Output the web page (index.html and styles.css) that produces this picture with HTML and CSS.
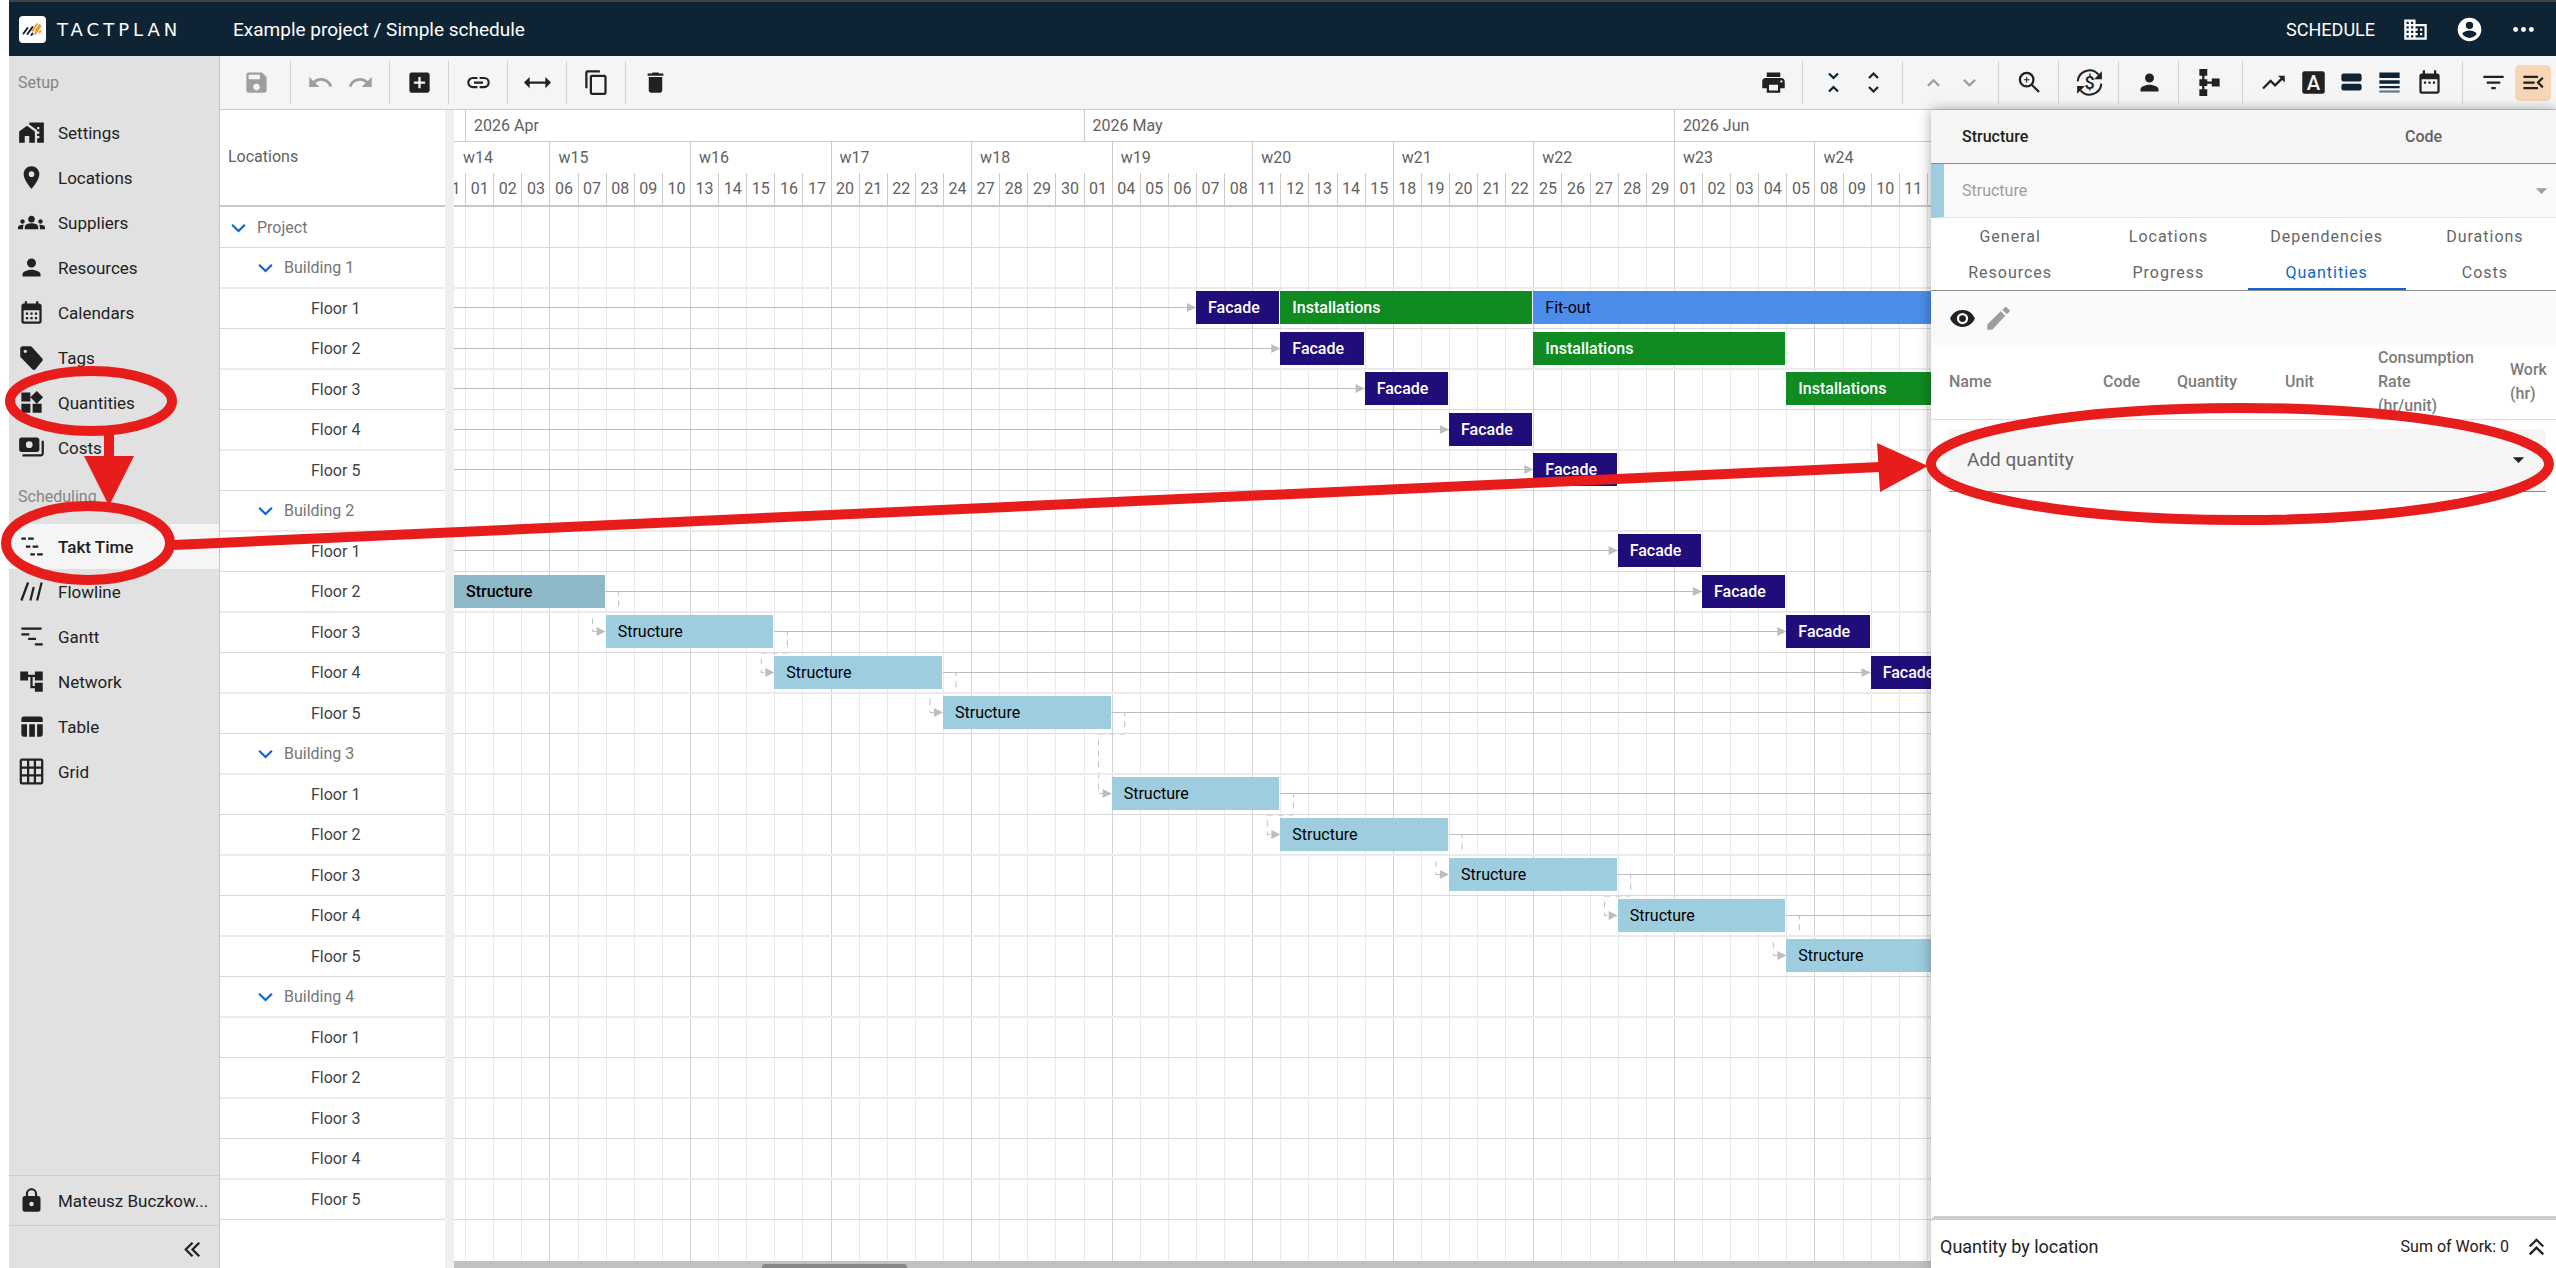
FILE: index.html
```html
<!DOCTYPE html>
<html lang="en">
<head>
  <meta charset="UTF-8">
  <title>Tactplan - Simple schedule</title>
  <meta name="viewport" content="width=device-width, initial-scale=1.0">
  <link rel="stylesheet" href="styles.css">
</head>
<body>

  <!-- icon set -->
  <svg class="defs" width="0" height="0" aria-hidden="true">
    <symbol id="i-home" viewBox="0 0 24 24"><path d="M1 11v10h5v-6h4v6h5V11L8 6zM10 3v1.97l7 5V11h2v2h-2v2h2v2h-2v4h6V3H10zm9 6h-2V7h2v2z"/></symbol>
    <symbol id="i-pin" viewBox="0 0 24 24"><path d="M12 2C8.13 2 5 5.13 5 9c0 5.25 7 13 7 13s7-7.75 7-13c0-3.87-3.13-7-7-7zm0 9.5a2.5 2.5 0 0 1 0-5 2.5 2.5 0 0 1 0 5z"/></symbol>
    <symbol id="i-groups" viewBox="0 0 24 24"><path d="M12 12.75c1.63 0 3.07.39 4.24.9 1.08.48 1.76 1.56 1.76 2.73V18H6v-1.61c0-1.18.68-2.26 1.76-2.73 1.17-.52 2.61-.91 4.24-.91zM4 13c1.1 0 2-.9 2-2s-.9-2-2-2-2 .9-2 2 .9 2 2 2zm1.13 1.1C4.76 14.04 4.39 14 4 14c-.99 0-1.93.21-2.78.58C.48 14.9 0 15.62 0 16.43V18h4.5v-1.61c0-.83.23-1.61.63-2.29zM20 13c1.1 0 2-.9 2-2s-.9-2-2-2-2 .9-2 2 .9 2 2 2zm4 3.43c0-.81-.48-1.53-1.22-1.85A6.95 6.95 0 0 0 20 14c-.39 0-.76.04-1.13.1.4.68.63 1.46.63 2.29V18H24v-1.57zM12 6c1.66 0 3 1.34 3 3s-1.34 3-3 3-3-1.34-3-3 1.34-3 3-3z"/></symbol>
    <symbol id="i-person" viewBox="0 0 24 24"><path d="M12 12c2.21 0 4-1.79 4-4s-1.79-4-4-4-4 1.79-4 4 1.79 4 4 4zm0 2c-2.67 0-8 1.34-8 4v2h16v-2c0-2.66-5.33-4-8-4z"/></symbol>
    <symbol id="i-calendar" viewBox="0 0 24 24"><path d="M19 4h-1V2h-2v2H8V2H6v2H5c-1.11 0-2 .9-2 2v14a2 2 0 0 0 2 2h14c1.1 0 2-.9 2-2V6c0-1.1-.9-2-2-2zm0 16H5V10h14v10zM9 14H7v-2h2v2zm4 0h-2v-2h2v2zm4 0h-2v-2h2v2zm-8 4H7v-2h2v2zm4 0h-2v-2h2v2zm4 0h-2v-2h2v2z"/></symbol>
    <symbol id="i-range" viewBox="0 0 24 24"><path d="M9 11H7v2h2v-2zm4 0h-2v2h2v-2zm4 0h-2v2h2v-2zm2-7h-1V1h-2v3H8V1H6v3H5c-1.11 0-2 .9-2 2v14a2 2 0 0 0 2 2h14c1.1 0 2-.9 2-2V6c0-1.1-.9-2-2-2zm0 16H5V9h14v11z"/></symbol>
    <symbol id="i-tag" viewBox="0 0 24 24"><path d="M4 2h7c.6 0 1.1.2 1.4.6l9 10c.8.8.8 2 0 2.8L15.5 22.400c-.8.8-2 .8-2.800 0L3 12.500C2.400 12 2 11.500 2 11V4c0-1.100.9-2 2-2zm2.500 3A1.500 1.500 0 1 0 6.500 8 1.500 1.500 0 0 0 6.500 5z"/></symbol>
    <symbol id="i-widgets" viewBox="0 0 24 24"><path d="M13 13v8h8v-8h-8zM3 21h8v-8H3v8zM3 3v8h8V3H3zm13.660-1.310L11 7.340 16.660 13l5.660-5.660-5.660-5.650z"/></symbol>
    <symbol id="i-costs" viewBox="0 0 24 24"><path d="M23 6v11c0 1.660-1.340 3-3 3H4v-2h16c.55 0 1-.45 1-1V6h2zM3 3h14c1.100 0 2 .9 2 2v9c0 1.100-.9 2-2 2H3c-1.100 0-2-.9-2-2V5c0-1.100.9-2 2-2zm7 3.500a3 3 0 1 0 0 6 3 3 0 0 0 0-6z"/></symbol>
    <symbol id="i-takt" viewBox="0 0 24 24"><path d="M3 4h4v2H3zM9 4h5v2H9zM7 11h4v2H7zM13 11h5v2h-5zM11 18h4v2h-4zM17 18h5v2h-5z"/></symbol>
    <symbol id="i-flow" viewBox="0 0 24 24"><path d="M3 20L9 4M11 20L14 8M17 20L21 4" fill="none" stroke="currentColor" stroke-width="2"/></symbol>
    <symbol id="i-gantt" viewBox="0 0 24 24"><path d="M3 4h18v2H3zM3 9h7v2H3zM9 13h7v2H9zM15 18h7v2h-7z"/></symbol>
    <symbol id="i-network" viewBox="0 0 24 24"><path d="M22 11V3h-7v3H9V3H2v8h7V8h2v10h4v3h7v-8h-7v3h-2V8h2v3z"/></symbol>
    <symbol id="i-table" viewBox="0 0 24 24"><path d="M10 10.020h5V21h-5V10.020zM17 21h3c1.100 0 2-.9 2-2v-9h-5v11zm3-18H5c-1.100 0-2 .9-2 2v3h19V5c0-1.100-.9-2-2-2zM3 19c0 1.100.9 2 2 2h3V10H3v9z"/></symbol>
    <symbol id="i-grid" viewBox="0 0 24 24"><path d="M3.500 1.500h17c.6 0 1 .4 1 1v19c0 .6-.4 1-1 1h-17c-.6 0-1-.4-1-1v-19c0-.6.4-1 1-1zM9 2v20M15 2v20M3 8.500h18M3 15.500h18" fill="none" stroke="currentColor" stroke-width="2"/></symbol>
    <symbol id="i-lock" viewBox="0 0 24 24"><path d="M18 8h-1V6c0-2.760-2.240-5-5-5S7 3.240 7 6v2H6c-1.100 0-2 .9-2 2v10c0 1.100.9 2 2 2h12c1.100 0 2-.9 2-2V10c0-1.100-.9-2-2-2zm-6 9a2 2 0 1 1 0-4 2 2 0 0 1 0 4zm3.100-9H8.900V6a3.100 3.100 0 0 1 6.200 0v2z"/></symbol>
    <symbol id="i-dleft" viewBox="0 0 24 24"><path d="M12 6l-6 6 6 6M18 6l-6 6 6 6" fill="none" stroke="currentColor" stroke-width="2"/></symbol>
    <symbol id="i-dup" viewBox="0 0 24 24"><path d="M6 12l6-6 6 6M6 19l6-6 6 6" fill="none" stroke="currentColor" stroke-width="2"/></symbol>
    <symbol id="i-save" viewBox="0 0 24 24"><path d="M17 3H5a2 2 0 0 0-2 2v14a2 2 0 0 0 2 2h14c1.100 0 2-.9 2-2V7l-4-4zm-5 16c-1.660 0-3-1.340-3-3s1.340-3 3-3 3 1.340 3 3-1.340 3-3 3zm3-10H5V5h10v4z"/></symbol>
    <symbol id="i-undo" viewBox="0 0 24 24"><path d="M12.500 8c-2.650 0-5.050.99-6.900 2.600L2 7v9h9l-3.620-3.620A8 8 0 0 1 20.100 16l2.370-.78A10.500 10.500 0 0 0 12.500 8z"/></symbol>
    <symbol id="i-redo" viewBox="0 0 24 24"><path d="M18.400 10.600A10.500 10.500 0 0 0 1.540 15.220L3.900 16a8 8 0 0 1 12.720-3.620L13 16h9V7l-3.600 3.600z"/></symbol>
    <symbol id="i-add" viewBox="0 0 24 24"><path d="M19 3H5a2 2 0 0 0-2 2v14a2 2 0 0 0 2 2h14c1.100 0 2-.9 2-2V5c0-1.100-.9-2-2-2zm-2 10h-4v4h-2v-4H7v-2h4V7h2v4h4v2z"/></symbol>
    <symbol id="i-link" viewBox="0 0 24 24"><path d="M3.900 12c0-1.710 1.390-3.100 3.100-3.100h4V7H7a5 5 0 0 0 0 10h4v-1.900H7A3.100 3.100 0 0 1 3.900 12zM8 13h8v-2H8v2zm9-6h-4v1.900h4a3.100 3.100 0 0 1 0 6.200h-4V17h4a5 5 0 0 0 0-10z"/></symbol>
    <symbol id="i-width" viewBox="0 0 24 24"><path d="M0 12l5-5v4h14V7l5 5-5 5v-4H5v4z"/></symbol>
    <symbol id="i-copy" viewBox="0 0 24 24"><path d="M15 1H4a2 2 0 0 0-2 2v14h2V3h11V1zm4 4H8a2 2 0 0 0-2 2v14c0 1.100.9 2 2 2h11c1.100 0 2-.9 2-2V7c0-1.100-.9-2-2-2zm0 16H8V7h11v14z"/></symbol>
    <symbol id="i-trash" viewBox="0 0 24 24"><path d="M6 19c0 1.100.9 2 2 2h8c1.100 0 2-.9 2-2V7H6v12zM19 4h-3.500l-1-1h-5l-1 1H5v2h14V4z"/></symbol>
    <symbol id="i-print" viewBox="0 0 24 24"><path d="M19 8H5c-1.660 0-3 1.340-3 3v6h4v4h12v-4h4v-6c0-1.660-1.340-3-3-3zm-3 11H8v-5h8v5zm3-7a1 1 0 1 1 0-2 1 1 0 0 1 0 2zm-1-9H6v4h12V3z"/></symbol>
    <symbol id="i-fold" viewBox="0 0 24 24"><path d="M8 4l4 4 4-4M8 20l4-4 4 4" fill="none" stroke="currentColor" stroke-width="2"/></symbol>
    <symbol id="i-unfold" viewBox="0 0 24 24"><path d="M8 8l4-4 4 4M8 16l4 4 4-4" fill="none" stroke="currentColor" stroke-width="2"/></symbol>
    <symbol id="i-up" viewBox="0 0 24 24"><path d="M7 15l5-5 5 5" fill="none" stroke="currentColor" stroke-width="2"/></symbol>
    <symbol id="i-down" viewBox="0 0 24 24"><path d="M7 9.500l5 5 5-5" fill="none" stroke="currentColor" stroke-width="2"/></symbol>
    <symbol id="i-zoom" viewBox="0 0 24 24"><path d="M14 14l6.500 6.500M9.500 3.500a6 6 0 1 0 0 12 6 6 0 0 0 0-12z" fill="none" stroke="currentColor" stroke-width="2"/><path d="M9.500 7v5M7 9.500h5" fill="none" stroke="currentColor"/></symbol>
    <symbol id="i-dollar" viewBox="0 0 24 24"><path d="M1.500 11A10.500 10.500 0 0 1 20 5M22.500 13A10.500 10.500 0 0 1 4 19" fill="none" stroke="currentColor" stroke-width="1.800"/><path d="M23 2v7h-7zM1 22v-7h7z"/><text x="12" y="17.500" text-anchor="middle" font-size="16" font-weight="500">$</text></symbol>
    <symbol id="i-tree" viewBox="0 0 24 24"><path d="M3 0h7v6H7.500v3H10v2h4V8.500h7v7h-7V13h-4v2H7.500v3H10v6H3v-6h2.500v-3H3V9h2.500V6H3z"/></symbol>
    <symbol id="i-trend" viewBox="0 0 24 24"><path d="M16 6l2.290 2.290-4.880 4.880-4-4L2 16.590 3.410 18l6-6 4 4 6.300-6.290L22 12V6z"/></symbol>
    <symbol id="i-letter" viewBox="0 0 24 24"><rect x="2" y="2" width="20" height="20" rx="2"/><text x="12" y="18.500" text-anchor="middle" font-size="18" font-weight="500" fill="#f5f5f5">A</text></symbol>
    <symbol id="i-bars" viewBox="0 0 24 24"><rect x="3" y="4" width="18" height="7" rx="2"/><rect x="3" y="13" width="18" height="6" rx="2"/></symbol>
    <symbol id="i-lines" viewBox="0 0 24 24"><path d="M3 3h18v5H3zM3 10h18v3H3zM3 15h18v2H3z"/><path d="M3 19h18v2H3z" opacity=".6"/></symbol>
    <symbol id="i-filter" viewBox="0 0 24 24"><path d="M10 18h4v-2h-4v2zM3 6v2h18V6H3zm3 7h12v-2H6v2z"/></symbol>
    <symbol id="i-menu" viewBox="0 0 24 24"><path d="M3 18h13v-2H3v2zm0-5h10v-2H3v2zm0-7v2h13V6H3zm18 9.590L17.420 12 21 8.410 19.590 7l-5 5 5 5L21 15.590z"/></symbol>
    <symbol id="i-building" viewBox="0 0 24 24"><path d="M12 7V3H2v18h20V7H12zM6 19H4v-2h2v2zm0-4H4v-2h2v2zm0-4H4V9h2v2zm0-4H4V5h2v2zm4 12H8v-2h2v2zm0-4H8v-2h2v2zm0-4H8V9h2v2zm0-4H8V5h2v2zm10 12h-8v-2h2v-2h-2v-2h2v-2h-2V9h8v10zm-2-8h-2v2h2v-2zm0 4h-2v2h2v-2z"/></symbol>
    <symbol id="i-account" viewBox="0 0 24 24"><path d="M12 1.500a10.500 10.500 0 1 0 0 21 10.500 10.500 0 0 0 0-21zM12 5a3.300 3.300 0 1 1 0 6.600A3.300 3.300 0 0 1 12 5zm0 14.500a7.600 7.600 0 0 1-6.300-3.400c0-2 4.200-3.200 6.300-3.200s6.300 1.200 6.300 3.200a7.600 7.600 0 0 1-6.300 3.400z"/></symbol>
    <symbol id="i-dots" viewBox="0 0 24 24"><circle cx="5" cy="12" r="2.200"/><circle cx="12" cy="12" r="2.200"/><circle cx="19" cy="12" r="2.200"/></symbol>
    <symbol id="i-eye" viewBox="0 0 24 24"><path d="M12 4.500C7 4.500 2.730 7.610 1 12c1.730 4.390 6 7.500 11 7.500s9.270-3.110 11-7.500c-1.730-4.390-6-7.500-11-7.500zM12 17a5 5 0 1 1 0-10 5 5 0 0 1 0 10zm0-8a3 3 0 1 0 0 6 3 3 0 0 0 0-6z"/></symbol>
    <symbol id="i-pencil" viewBox="0 0 24 24"><path d="M2 17.250V22h4.500L18 9.500 14 5.500zM21.700 5.900a1 1 0 0 0 0-1.400l-2.500-2.500a1 1 0 0 0-1.400 0L15.400 4.300l4 4z"/></symbol>
    <symbol id="i-arrow" viewBox="0 0 24 24"><path d="M7 10h10l-5 5z"/></symbol>
    <symbol id="i-logo" viewBox="0 0 27 27">
      <g fill="none" stroke-width="2" stroke-linecap="round">
        <path d="M4.500 17.500L8.500 12M8.500 18L13.500 11M12.500 19L13.500 17.500" stroke="#0e2435"/>
        <path d="M13.500 14.500L18 8M16 18L21.500 10M16.800 14.500L20.500 9M20.500 16.500L21.500 15" stroke="#f29a2e"/>
      </g>
    </symbol>
  </svg>

  <div class="app">
    <header class="topbar">
      <svg class="logo"><use href="#i-logo"/></svg>
      <span class="brand">TACTPLAN</span>
      <span class="crumb">Example project / Simple schedule</span>
      <span class="mode">SCHEDULE</span>
      <button class="top-btn" aria-label="Company"><svg class="icon"><use href="#i-building"/></svg></button>
      <button class="top-btn" aria-label="Account"><svg class="icon"><use href="#i-account"/></svg></button>
      <button class="top-btn" aria-label="More"><svg class="icon"><use href="#i-dots"/></svg></button>
    </header>

    <div class="main">
      <nav class="sidebar">
        <div class="nav-title">Setup</div>
        <a href="#" class="nav-item"><svg class="icon"><use href="#i-home"/></svg>Settings</a>
        <a href="#" class="nav-item"><svg class="icon"><use href="#i-pin"/></svg>Locations</a>
        <a href="#" class="nav-item"><svg class="icon"><use href="#i-groups"/></svg>Suppliers</a>
        <a href="#" class="nav-item"><svg class="icon"><use href="#i-person"/></svg>Resources</a>
        <a href="#" class="nav-item"><svg class="icon"><use href="#i-calendar"/></svg>Calendars</a>
        <a href="#" class="nav-item"><svg class="icon"><use href="#i-tag"/></svg>Tags</a>
        <a href="#" class="nav-item"><svg class="icon"><use href="#i-widgets"/></svg>Quantities</a>
        <a href="#" class="nav-item"><svg class="icon"><use href="#i-costs"/></svg>Costs</a>
        <div class="nav-title">Scheduling</div>
        <a href="#" class="nav-item active"><svg class="icon"><use href="#i-takt"/></svg>Takt Time</a>
        <a href="#" class="nav-item"><svg class="icon"><use href="#i-flow"/></svg>Flowline</a>
        <a href="#" class="nav-item"><svg class="icon"><use href="#i-gantt"/></svg>Gantt</a>
        <a href="#" class="nav-item"><svg class="icon"><use href="#i-network"/></svg>Network</a>
        <a href="#" class="nav-item"><svg class="icon"><use href="#i-table"/></svg>Table</a>
        <a href="#" class="nav-item"><svg class="icon"><use href="#i-grid"/></svg>Grid</a>
        <div class="nav-user"><svg class="icon"><use href="#i-lock"/></svg><span>Mateusz Buczkow...</span></div>
        <button class="nav-fold" aria-label="Collapse menu"><svg class="icon"><use href="#i-dleft"/></svg></button>
      </nav>

      <div class="content">
        <div class="toolbar">
          <div class="group first"><button disabled aria-label="Save"><svg class="icon"><use href="#i-save"/></svg></button></div>
          <div class="group">
            <button disabled aria-label="Undo"><svg class="icon"><use href="#i-undo"/></svg></button>
            <button disabled aria-label="Redo"><svg class="icon"><use href="#i-redo"/></svg></button>
          </div>
          <div class="group"><button aria-label="Add"><svg class="icon"><use href="#i-add"/></svg></button></div>
          <div class="group"><button aria-label="Link"><svg class="icon"><use href="#i-link"/></svg></button></div>
          <div class="group"><button aria-label="Stretch"><svg class="icon"><use href="#i-width"/></svg></button></div>
          <div class="group"><button aria-label="Copy"><svg class="icon"><use href="#i-copy"/></svg></button></div>
          <div class="group last"><button aria-label="Delete"><svg class="icon"><use href="#i-trash"/></svg></button></div>
          <div class="spacer"></div>
          <div class="group"><button aria-label="Print"><svg class="icon"><use href="#i-print"/></svg></button></div>
          <div class="group navy">
            <button aria-label="Collapse rows"><svg class="icon"><use href="#i-fold"/></svg></button>
            <button aria-label="Expand rows"><svg class="icon"><use href="#i-unfold"/></svg></button>
          </div>
          <div class="group tight">
            <button disabled aria-label="Move up"><svg class="icon"><use href="#i-up"/></svg></button>
            <button disabled aria-label="Move down"><svg class="icon"><use href="#i-down"/></svg></button>
          </div>
          <div class="group"><button aria-label="Zoom"><svg class="icon"><use href="#i-zoom"/></svg></button></div>
          <div class="group"><button aria-label="Cost flow"><svg class="icon"><use href="#i-dollar"/></svg></button></div>
          <div class="group"><button aria-label="Resources"><svg class="icon"><use href="#i-person"/></svg></button></div>
          <div class="group wide"><button aria-label="Structure"><svg class="icon"><use href="#i-tree"/></svg></button></div>
          <div class="group wide">
            <button aria-label="Trend"><svg class="icon"><use href="#i-trend"/></svg></button>
            <button aria-label="Labels"><svg class="icon"><use href="#i-letter"/></svg></button>
            <button class="slim" aria-label="Bar style"><svg class="icon navy"><use href="#i-bars"/></svg></button>
            <button aria-label="Row height"><svg class="icon navy"><use href="#i-lines"/></svg></button>
            <button aria-label="Calendar"><svg class="icon"><use href="#i-range"/></svg></button>
          </div>
          <div class="group last">
            <button aria-label="Filter"><svg class="icon"><use href="#i-filter"/></svg></button>
            <button class="on" aria-label="Details panel"><svg class="icon"><use href="#i-menu"/></svg></button>
          </div>
        </div>

        <div class="workspace">
          <div class="tree">
            <div class="tree-head">Locations</div>
            <div id="tree"></div>
          </div>
          <div class="splitter"></div>

          <div class="timeline">
            <div class="track head">
              <div class="months" id="months"></div>
              <div class="weeks" id="weeks"></div>
              <div class="days" id="days"></div>
            </div>
            <div class="track chart">
              <div class="lines" id="lines"></div>
              <svg class="deps" id="deps" preserveAspectRatio="none"></svg>
              <div class="rows" id="rows"></div>
            </div>
            <div class="scrollbar"><div class="thumb"></div></div>
          </div>

          <aside class="panel">
            <div class="panel-head"><strong>Structure</strong><span>Code</span></div>
            <div class="type-row">
              <select disabled aria-label="Type"><option>Structure</option></select>
              <svg class="icon"><use href="#i-arrow"/></svg>
            </div>
            <div class="tabs">
              <button>General</button><button>Locations</button><button>Dependencies</button><button>Durations</button>
              <button>Resources</button><button>Progress</button><button class="active">Quantities</button><button>Costs</button>
            </div>
            <div class="tools">
              <button aria-label="View"><svg class="icon"><use href="#i-eye"/></svg></button>
              <button disabled aria-label="Edit"><svg class="icon"><use href="#i-pencil"/></svg></button>
            </div>
            <table class="quantities">
              <thead>
                <tr><th class="c-name">Name</th><th class="c-code">Code</th><th class="c-qty">Quantity</th><th class="c-unit">Unit</th><th class="c-rate">Consumption<br>Rate<br>(hr/unit)</th><th>Work (hr)</th></tr>
              </thead>
            </table>
            <div class="add">
              <select aria-label="Add quantity"><option>Add quantity</option></select>
              <svg class="icon"><use href="#i-arrow"/></svg>
            </div>
            <div class="panel-foot">
              <span class="foot-title">Quantity by location</span>
              <span>Sum of Work: 0</span>
              <button aria-label="Expand"><svg class="icon"><use href="#i-dup"/></svg></button>
            </div>
          </aside>
        </div>
      </div>
    </div>
  </div>

  <!-- guide marks over the page -->
  <svg class="marks" aria-hidden="true">
    <g fill="none" stroke="#e71d1b" stroke-width="10">
      <ellipse cx="91" cy="401" rx="81" ry="30"/>
      <path d="M109 434V460"/>
      <ellipse cx="88" cy="543" rx="82" ry="37"/>
      <path d="M174 545L1880 467"/>
      <ellipse cx="2240" cy="464" rx="309" ry="56"/>
    </g>
    <path d="M84 456H134L109 506zM1877 443L1928 466 1880 492z" fill="#e71d1b"/>
  </svg>

  <script>
    // the track starts on Tue 31 March and shows 54 working days
    const DAYS = 54;
    const DAY_W = 28;

    // label, level
    const rows = [["Project", 0]];
    for (let b = 1; b <= 4; b++) {
      rows.push(["Building " + b, 1]);
      for (let f = 1; f <= 5; f++) rows.push(["Floor " + f, 2]);
    }

    // row, first day, length, type
    const tasks = [
      [2, 27, 3, "facade"], [2, 30, 9, "installations"], [2, 39, 15, "fit-out"],
      [3, 30, 3, "facade"], [3, 39, 9, "installations"],
      [4, 33, 3, "facade"], [4, 48, 6, "installations"],
      [5, 36, 3, "facade"],
      [6, 39, 3, "facade"],
      [8, 42, 3, "facade"],
      [9, 0, 6, "structure", true], [9, 45, 3, "facade"],
      [10, 6, 6, "structure"], [10, 48, 3, "facade"],
      [11, 12, 6, "structure"], [11, 51, 3, "facade"],
      [12, 18, 6, "structure"],
      [14, 24, 6, "structure"],
      [15, 30, 6, "structure"],
      [16, 36, 6, "structure"],
      [17, 42, 6, "structure"],
      [18, 48, 6, "structure"]
    ];

    // row, from day, to day (54 runs off the view)
    const links = [
      [2, 0, 27], [3, 0, 30], [4, 0, 33], [5, 0, 36], [6, 0, 39], [8, 0, 42],
      [9, 6, 45], [10, 12, 48], [11, 18, 51], [12, 24, 54],
      [14, 30, 54], [15, 36, 54], [16, 42, 54], [17, 48, 54]
    ];

    // structure takt: from row, to row, day
    const takt = [
      [9, 10, 6], [10, 11, 12], [11, 12, 18], [12, 14, 24],
      [14, 15, 30], [15, 16, 36], [16, 17, 42], [17, 18, 48]
    ];

    const el = (parent, cls, text) => {
      const d = document.createElement("div");
      d.className = cls;
      if (text) d.textContent = text;
      parent.appendChild(d);
      return d;
    };
    const byId = id => document.getElementById(id);

    // header
    const dates = [];
    const date = new Date(2026, 2, 31);
    while (dates.length < DAYS) {
      if (date.getDay() % 6) dates.push(new Date(date));
      date.setDate(date.getDate() + 1);
    }
    [[1, 23, "2026 Apr"], [23, 44, "2026 May"], [44, 54, "2026 Jun"]].forEach(m => {
      el(byId("months"), "month", m[2]).style.gridColumn = (m[0] + 1) + " / " + (m[1] + 1);
    });
    for (let w = 14, start = 0, end = 4; start < DAYS; w++) {
      el(byId("weeks"), start ? "week" : "week clipped", "w" + w).style.gridColumn = (start + 1) + " / " + (end + 1);
      start = end;
      end = Math.min(end + 5, DAYS);
    }
    dates.forEach(d => {
      const monday = d.getDay() === 1 ? " monday" : "";
      el(byId("days"), "day" + monday, String(d.getDate()).padStart(2, "0"));
      el(byId("lines"), "line" + monday);
    });

    // rows
    rows.forEach(([name, level], i) => {
      const item = el(byId("tree"), "row level-" + level);
      if (level < 2) {
        item.innerHTML = '<button class="toggle" aria-label="Toggle"><svg viewBox="0 0 24 24"><path d="M3 8l9 9 9-9"/></svg></button>';
      }
      item.append(name);
      const lane = el(byId("rows"), "row");
      tasks.filter(t => t[0] === i).forEach(([, from, len, type, selected]) => {
        const label = type[0].toUpperCase() + type.slice(1);
        const bar = el(lane, "bar " + type + (selected ? " selected" : ""), label);
        bar.style.gridColumn = (from + 1) + " / span " + len;
      });
    });

    // dependency lines, rows alternate 41 and 40 px
    const rowTop = r => Math.ceil(r * 81 / 2);
    const rowMid = r => rowTop(r) + 19.5;
    const tip = (x, y) => `<path class="tip" d="M${x - 9} ${y - 4.5}L${x} ${y}L${x - 9} ${y + 4.5}z"/>`;
    let svg = "";
    links.forEach(([r, a, b]) => {
      svg += `<path d="M${a * DAY_W} ${rowMid(r)}H${b * DAY_W}"/>`;
      if (b < DAYS) svg += tip(b * DAY_W, rowMid(r));
    });
    takt.forEach(([a, b, day]) => {
      const x = day * DAY_W;
      svg += `<path class="dashed" d="M${x} ${rowMid(a)}H${x + 13}V${rowTop(a + 1)}H${x - 13}V${rowMid(b)}H${x - 8}"/>` + tip(x, rowMid(b));
    });
    byId("deps").setAttribute("viewBox", `0 0 ${DAYS * DAY_W} ${rowTop(rows.length)}`);
    byId("deps").setAttribute("height", rowTop(rows.length));
    byId("deps").innerHTML = svg;
  </script>

</body>
</html>
```
FILE: styles.css
```css
* {
  box-sizing: border-box;
}

body {
  margin: 0;
  font-family: Roboto, "Liberation Sans", sans-serif;
  font-size: 16px;
  color: #212121;
  background: #fff;
  overflow: hidden;
}

button, select {
  font: inherit;
  color: inherit;
  background: none;
  border: none;
  padding: 0;
}

button {
  cursor: pointer;
}

.defs {
  display: block;
}

.icon {
  width: 27px;
  height: 27px;
  fill: currentColor;
  flex: none;
  display: block;
}

.app {
  height: 100vh;
  padding-left: 9px;
  display: flex;
  flex-direction: column;
}

/* top bar */
.topbar {
  height: 56px;
  flex: none;
  border-top: 2px solid #424242;
  background: #0e2435;
  color: #fff;
  display: flex;
  align-items: center;
  padding: 0 19px 0 10px;
  font-size: 18px;
}

.logo {
  width: 27px;
  height: 27px;
  background: #fff;
  border-radius: 4px;
}

.brand {
  width: 187px;
  padding-left: 11px;
  font-family: "DejaVu Sans", sans-serif;
  font-size: 18px;
  letter-spacing: 4px;
}

.crumb {
  font-size: 19px;
}

.mode {
  margin-left: auto;
  padding-right: 27px;
}

.top-btn {
  margin-right: 27px;
}

.top-btn:last-child {
  margin-right: 0;
}

.main {
  flex: 1;
  min-height: 0;
  display: flex;
}

/* sidebar */
.sidebar {
  width: 211px;
  flex: none;
  background: #e1e1e1;
  border-right: 1px solid #c6c6c6;
  display: flex;
  flex-direction: column;
  font-size: 17px;
}

.nav-title {
  height: 54px;
  line-height: 54px;
  padding-left: 9px;
  font-size: 16px;
  color: #858585;
}

.nav-item, .nav-user {
  height: 45px;
  padding: 0 9px;
  display: flex;
  align-items: center;
  gap: 13px;
  color: #212121;
  text-decoration: none;
}

.nav-item.active {
  background: #f5f5f5;
  font-weight: 500;
}

.nav-user {
  height: 50px;
  margin-top: auto;
  border-top: 1px solid #ccc;
  white-space: nowrap;
}

.nav-fold {
  height: 43px;
  padding: 10px 13px 0 0;
  border-top: 1px solid #ccc;
  display: flex;
  justify-content: flex-end;
}

/* toolbar */
.content {
  flex: 1;
  min-width: 0;
  display: flex;
  flex-direction: column;
}

.toolbar {
  height: 54px;
  flex: none;
  background: #f5f5f5;
  border-bottom: 1px solid #ccc;
  display: flex;
  align-items: center;
  padding-right: 3px;
}

.group {
  height: 43px;
  padding: 0 9px;
  border-right: 1px solid #d2d2d2;
  display: flex;
  align-items: center;
}

.spacer ~ .group {
  padding-left: 10px;
}

.group.first {
  padding: 0 14px 0 16px;
}

.spacer ~ .group.wide {
  padding-right: 13px;
}

.group.last {
  border-right: none;
  padding-right: 0;
}

.group button {
  width: 40px;
  height: 36px;
  display: flex;
  align-items: center;
  justify-content: center;
}

.spacer ~ .group.tight {
  padding: 0 11px 0 12px;
}

.group.tight button, .group button.slim {
  width: 36px;
}

.group button:disabled {
  color: #9e9e9e;
}

.navy {
  color: #0e2435;
}

.group button.on {
  width: 36px;
  margin: 0 2px;
  background: #f6d6b4;
  border-radius: 5px;
}

.spacer {
  flex: 1;
}

/* location tree */
.workspace {
  flex: 1;
  min-height: 0;
  display: flex;
}

.tree {
  width: 225px;
  flex: none;
  overflow: hidden;
}

.tree-head {
  height: 97px;
  line-height: 94px;
  padding-left: 8px;
  border-bottom: 2px solid #c8c8c8;
  color: #616161;
}

.row {
  height: 41px;
  border-bottom: 1px solid #d9d9d9;
}

.row:nth-child(even) {
  height: 40px;
  border-bottom: 1px solid #ebebeb;
  box-shadow: 0 1px 0 #ebebeb;
}

.tree .row {
  display: flex;
  align-items: center;
  color: #757575;
}

.level-0 {
  padding-left: 10px;
}

.level-1 {
  padding-left: 37px;
}

.tree .level-2 {
  padding-left: 91px;
  color: #424242;
}

.toggle {
  width: 17px;
  height: 17px;
  margin-right: 10px;
}

.toggle svg {
  display: block;
  fill: none;
  stroke: #0b66d0;
  stroke-width: 3;
}

.splitter {
  width: 9px;
  flex: none;
  background: #efefef;
}

/* timeline */
.timeline {
  flex: 1;
  min-width: 0;
  overflow: hidden;
  display: flex;
  flex-direction: column;
}

.track {
  margin: 0 -24px 0 -17px;
}

.months, .weeks, .days, .lines, .rows .row {
  display: grid;
  grid-template-columns: repeat(54, 1fr);
}

.head {
  color: #616161;
  border-bottom: 2px solid #c8c8c8;
}

.months {
  height: 32px;
  line-height: 31px;
  border-bottom: 1px solid #ccc;
}

.month, .week {
  padding-left: 8px;
  border-left: 1px solid #ccc;
}

.weeks {
  height: 31px;
  line-height: 31px;
}

.week.clipped {
  padding-left: 25px;
}

.days {
  height: 32px;
  line-height: 31px;
}

.day {
  min-width: 0;
  text-align: center;
  border-left: 1px solid #ccc;
}

.chart {
  flex: 1;
  min-height: 0;
  position: relative;
}

.lines {
  position: absolute;
  inset: 0;
}

.line {
  border-left: 1px solid #e9e9e9;
}

.line.monday {
  border-left-color: #d2d2d2;
}

.rows {
  position: relative;
}

.bar {
  grid-row: 1;
  height: 33px;
  line-height: 33px;
  margin: 3px 1px 0 0;
  padding-left: 12px;
  overflow: hidden;
  white-space: nowrap;
  color: #000;
}

.structure {
  background: #9ecddf;
}

.structure.selected {
  padding-left: 29px;
  background: #8cb8c8;
  font-weight: 500;
}

.facade {
  background: #210d7a;
  color: #fff;
  font-weight: 500;
}

.installations {
  background: #108b22;
  color: #fff;
  font-weight: 500;
}

.fit-out {
  background: #4c8deb;
}

.deps {
  position: absolute;
  top: 0;
  left: 0;
  width: 100%;
}

.deps path {
  fill: none;
  stroke: #bdbdbd;
  vector-effect: non-scaling-stroke;
}

.deps .dashed {
  stroke-dasharray: 6 5;
}

.deps .tip {
  fill: #bdbdbd;
  stroke: none;
}

.scrollbar {
  height: 7px;
  flex: none;
  background: #c1c1c1;
  padding: 3px 0 0 308px;
}

.thumb {
  width: 145px;
  height: 4px;
  background: #888;
  border-radius: 3px 3px 0 0;
}

/* details panel */
.panel {
  width: 625px;
  flex: none;
  z-index: 2;
  background: #fff;
  box-shadow: 0 0 12px rgba(0, 0, 0, 0.35);
  display: flex;
  flex-direction: column;
  overflow: hidden;
}

.panel-head {
  height: 54px;
  flex: none;
  padding-left: 31px;
  background: #f5f5f5;
  border-bottom: 1px solid #8a8a8a;
  display: flex;
  align-items: center;
  color: #616161;
}

.panel-head strong {
  width: 443px;
  font-weight: 500;
  color: #212121;
}

.panel-head span {
  font-weight: 500;
}

.type-row {
  height: 54px;
  flex: none;
  padding-right: 1px;
  background: #fafafa;
  border-left: 13px solid #9ecddf;
  border-bottom: 1px solid #e4e4e4;
  color: #9e9e9e;
  display: flex;
  align-items: center;
}

.type-row select, .add select {
  flex: 1;
  height: 100%;
  appearance: none;
  padding-left: 18px;
  opacity: 1;
}

.tabs {
  flex: none;
  margin-right: -8px;
  border-bottom: 1px solid #8a8a8a;
  display: grid;
  grid-template-columns: repeat(4, 1fr);
}

.tabs button {
  height: 36px;
  color: #666;
  letter-spacing: 1px;
}

.tabs .active {
  color: #0b66d0;
  box-shadow: inset 0 -2px 0 #0b66d0;
}

.tools {
  height: 54px;
  flex: none;
  padding-left: 18px;
  background: #fafafa;
  display: flex;
  align-items: center;
  gap: 9px;
}

.tools button:disabled {
  color: #9e9e9e;
}

.quantities {
  table-layout: fixed;
  width: 100%;
  border-collapse: collapse;
  border-bottom: 1px solid #ddd;
}

.quantities th {
  height: 74px;
  padding: 0 0 0 18px;
  line-height: 24px;
  font-weight: 500;
  text-align: left;
  color: #7c7c7c;
}

.c-name {
  width: 154px;
}

.c-code {
  width: 74px;
}

.c-qty {
  width: 108px;
}

.c-unit {
  width: 93px;
}

.c-rate {
  width: 132px;
}

.add {
  height: 63px;
  flex: none;
  margin: 9px 10px 0 18px;
  padding-right: 14px;
  background: #f5f5f5;
  border-bottom: 1px solid #8a8a8a;
  border-radius: 5px 5px 0 0;
  display: flex;
  align-items: center;
  font-size: 19px;
}

.add select {
  color: #666;
}

.panel-foot {
  height: 52px;
  margin-top: auto;
  flex: none;
  padding: 4px 6px 0 9px;
  border-top: 4px solid #ccc;
  border-radius: 5px 0 0 0;
  display: flex;
  align-items: center;
}

.foot-title {
  flex: 1;
  font-size: 18px;
}

.panel-foot button {
  margin-left: 14px;
}

/* guide marks */
.marks {
  position: fixed;
  top: 0;
  left: 0;
  width: 100%;
  height: 100%;
  z-index: 10;
  pointer-events: none;
}
```
